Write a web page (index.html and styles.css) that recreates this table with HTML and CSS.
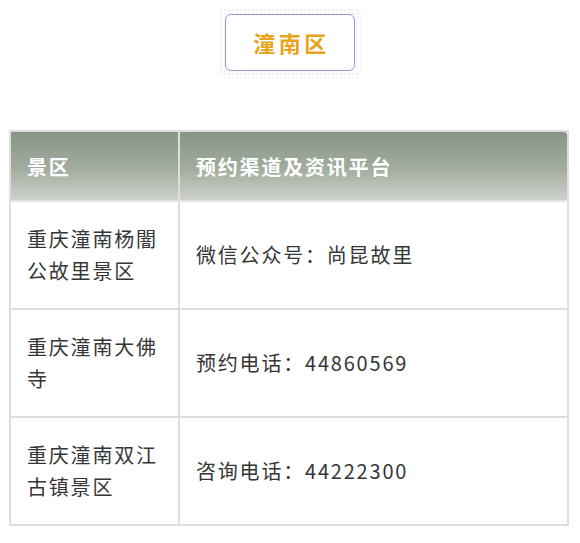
FILE: index.html
```html
<!DOCTYPE html>
<html lang="zh">
<head>
<meta charset="utf-8">
<link rel="stylesheet" href="styles.css">
</head>
<body>
<div class="badge-wrap">
  <div class="badge-deco">
    <div class="badge">潼南区</div>
  </div>
</div>
<table class="info">
  <colgroup>
    <col class="col1">
    <col class="col2">
  </colgroup>
  <thead>
    <tr class="head">
      <th>景区</th>
      <th class="c2">预约渠道及资讯平台</th>
    </tr>
  </thead>
  <tbody>
    <tr>
      <td>重庆潼南杨闇<br>公故里景区</td>
      <td>微信公众号：尚昆故里</td>
    </tr>
    <tr>
      <td>重庆潼南大佛<br>寺</td>
      <td>预约电话：44860569</td>
    </tr>
    <tr>
      <td>重庆潼南双江<br>古镇景区</td>
      <td>咨询电话：44222300</td>
    </tr>
  </tbody>
</table>
</body>
</html>
```
FILE: styles.css
```css
html, body {
  margin: 0;
  padding: 0;
  background: #ffffff;
}
body {
  width: 580px;
  height: 543px;
  overflow: hidden;
  font-family: "Noto Sans CJK SC", "Noto Sans", sans-serif;
}
.badge-wrap {
  display: flex;
  justify-content: center;
  padding-top: 8px;
}
.badge-deco {
  padding: 6px 6px 7px;
  border-radius: 6px;
  background-image: radial-gradient(circle, #f0eff5 0.7px, transparent 1.1px);
  background-size: 4px 4px;
  background-color: #fdfdfe;
}
.badge {
  width: 130px;
  height: 57px;
  box-sizing: border-box;
  border: 1.5px solid #8e9bcc;
  border-radius: 6px;
  background: #ffffff;
  color: #eaa41a;
  font-weight: 700;
  font-size: 22px;
  letter-spacing: 3.5px;
  display: flex;
  align-items: center;
  justify-content: center;
  padding-left: 3px;
  padding-bottom: 1px;
}
.info {
  margin: 52px 0 0 9px;
  width: 560px;
  border-collapse: collapse;
  table-layout: fixed;
  font-size: 20px;
  letter-spacing: 1.8px;
}
.col1 { width: 169px; }
.info th, .info td {
  border: 2px solid #dedede;
  text-align: left;
  vertical-align: middle;
  padding: 0 0 0 16px;
}
.head {
  height: 70px;
}
.head th {
  background: linear-gradient(to bottom, #879585 0%, #a3ad9f 55%, #cdd1ca 100%);
  color: #ffffff;
  font-weight: 700;
  border-top-color: #dcdedb;
  border-bottom-color: #e4e4e4;
}
.head th.c2 {
  border-top-right-radius: 6px;
}
.info tbody tr {
  height: 108px;
}
.info td {
  color: #363636;
  line-height: 32px;
  font-weight: 400;
}
```
